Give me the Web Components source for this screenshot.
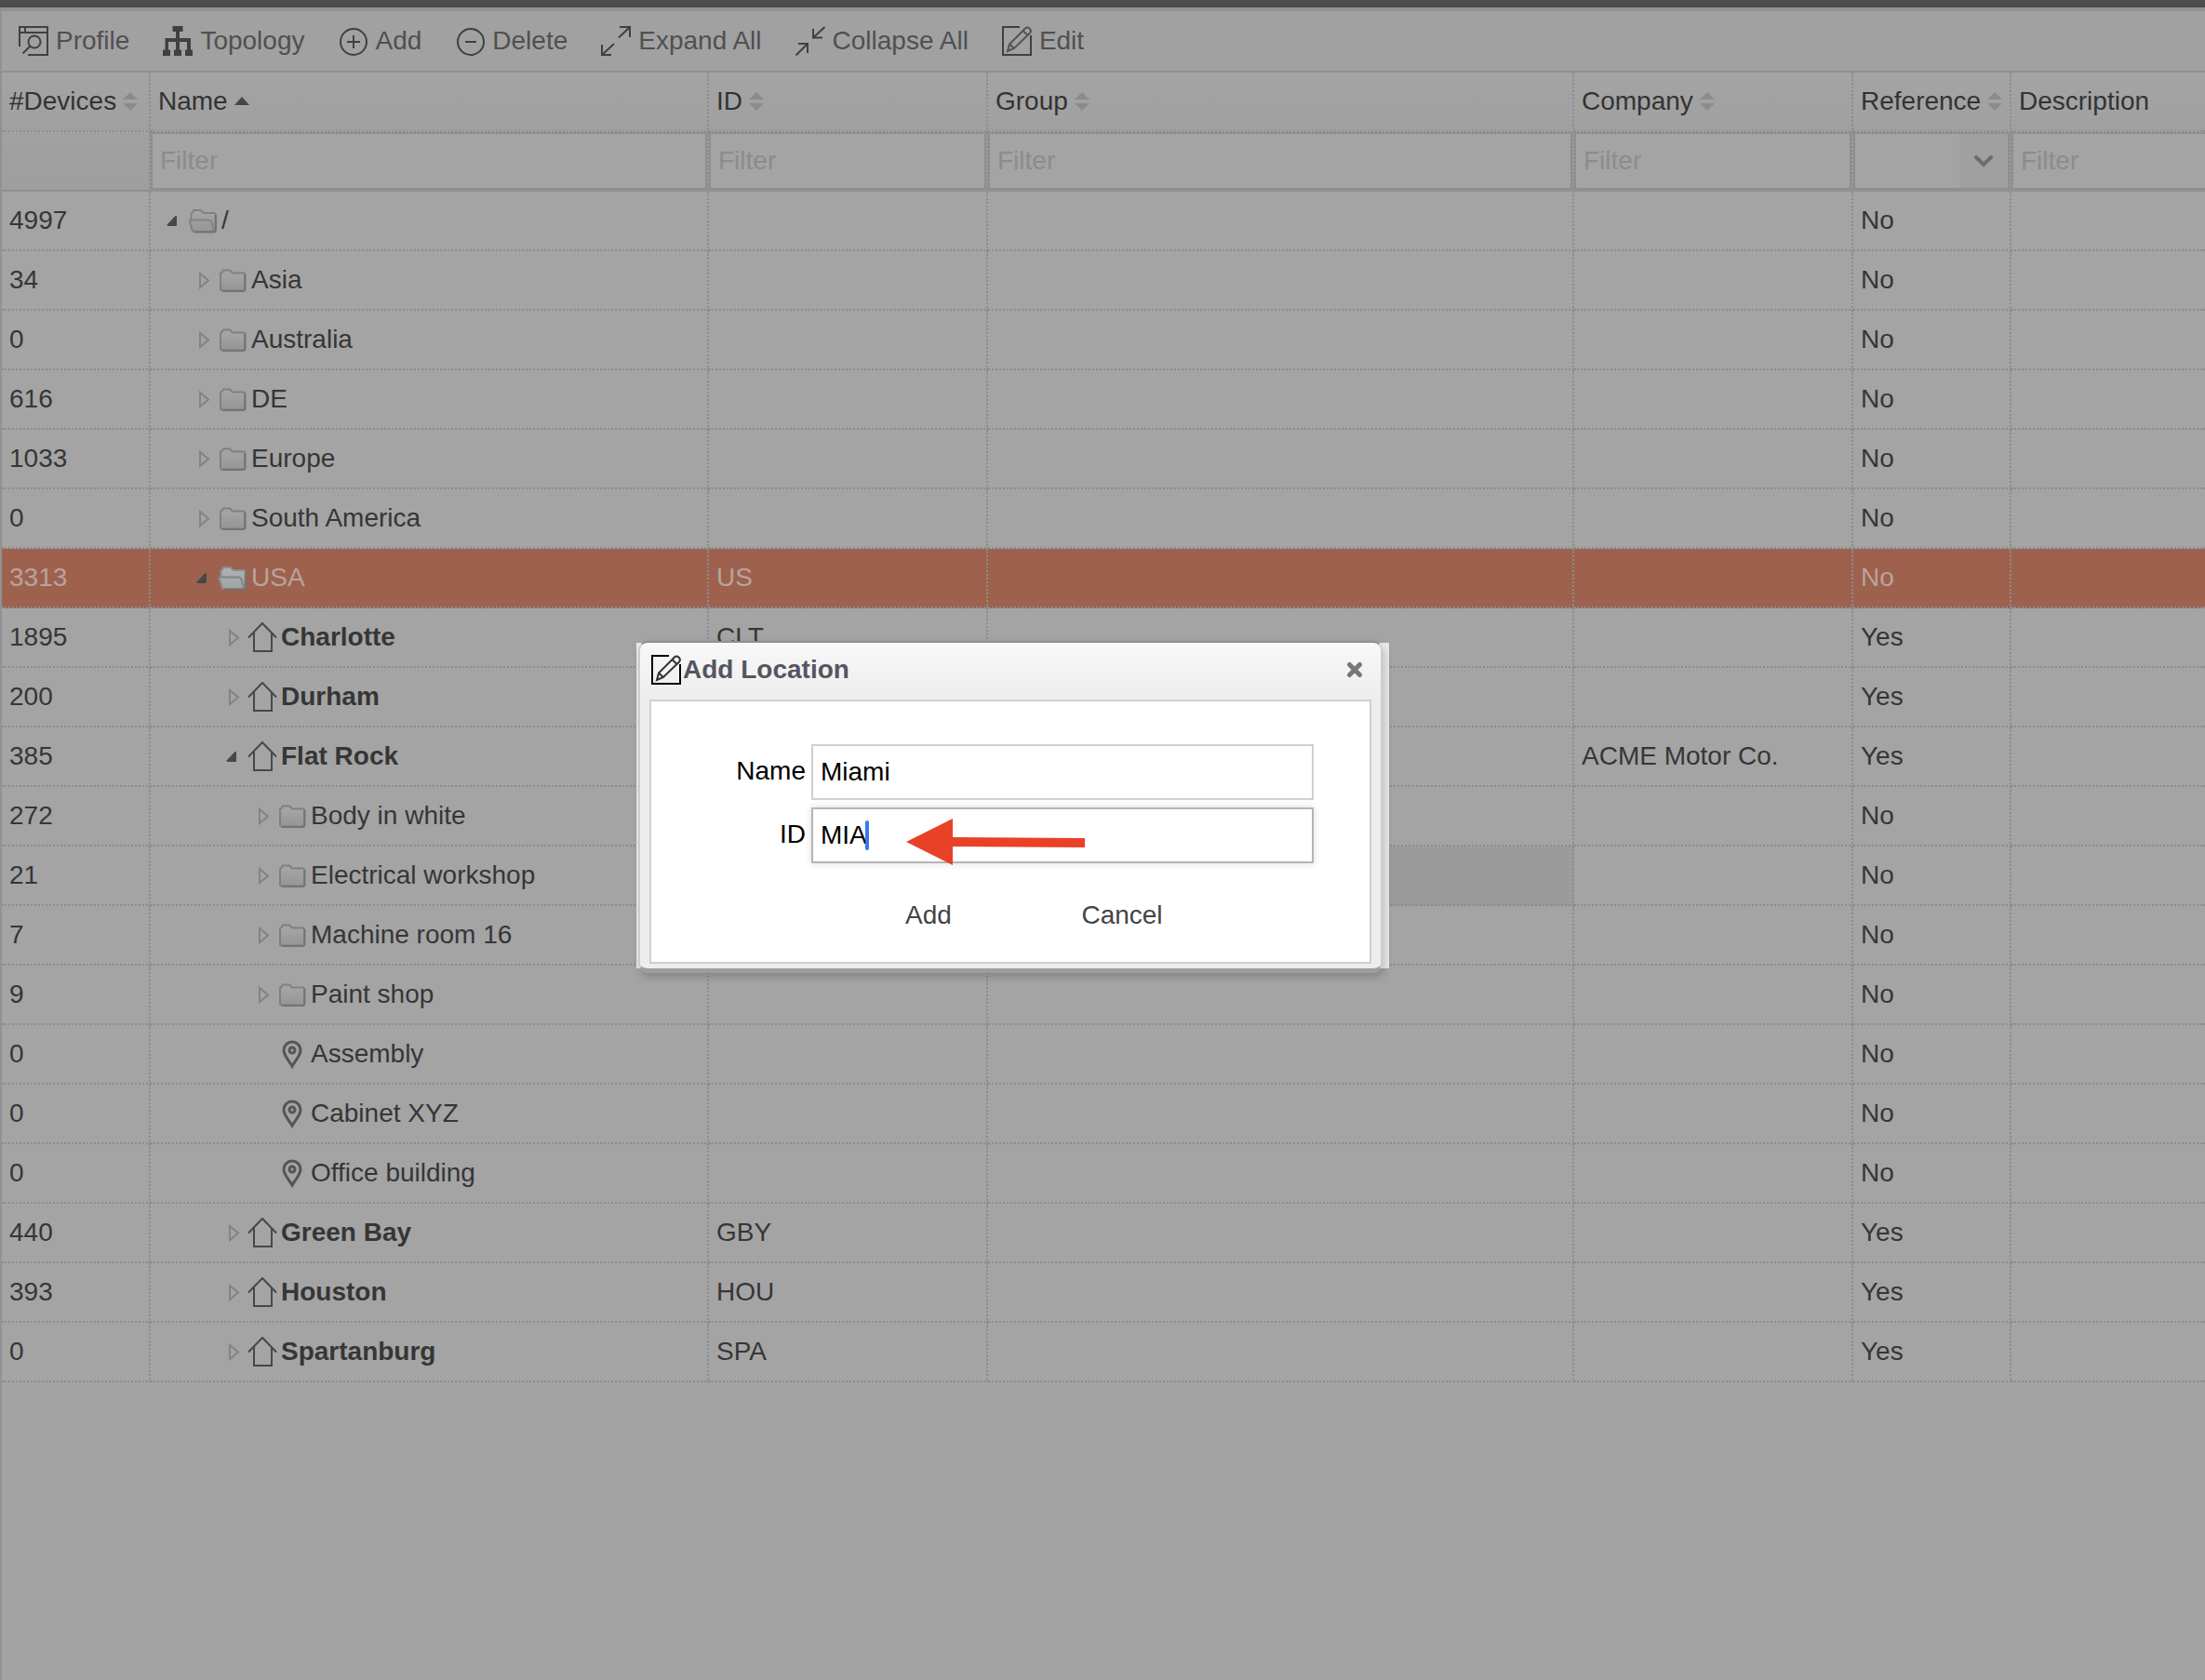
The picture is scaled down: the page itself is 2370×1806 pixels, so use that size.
<!DOCTYPE html>
<html lang="en">
<head>
<meta charset="utf-8">
<title>Locations</title>
<style>
  body {
    margin: 0;
    background: #a3a3a3;
    font: 28px/32px "Liberation Sans", Arial, sans-serif;
    color: #363636;
  }
</style>
</head>
<body>
<locations-app>
  <tool-bar>
    <tool-button icon="profile">Profile</tool-button>
    <tool-button icon="topology">Topology</tool-button>
    <tool-button icon="add">Add</tool-button>
    <tool-button icon="remove">Delete</tool-button>
    <tool-button icon="expand">Expand All</tool-button>
    <tool-button icon="collapse">Collapse All</tool-button>
    <tool-button icon="edit">Edit</tool-button>
  </tool-bar>
  <location-table></location-table>
  <location-dialog slot="overlay" name="Miami" code="MIA">Add Location</location-dialog>
</locations-app>

<script>
// all icons share a 32x32 grid
const ICONS = {
  profile: `<path d="M1 22V1H31V31H10M1 7H31M7 1V7"/><circle cx="17" cy="17" r="6.5"/><path d="M12.500 21.500L4.500 29.500"/>`,
  topology: `<path fill="currentColor" stroke="none" d="M10.500 0h11v6h-3.500v7h12v12.500h2V32h-8v-6.500h2V17h-8v8.500h2V32h-8v-6.500h2V17H6v8.500h2V32H0v-6.500h2.500V13H14V6h-3.500z"/>`,
  add: `<circle cx="17" cy="17" r="14"/><path d="M10 17H24M17 10V24"/>`,
  remove: `<circle cx="17" cy="17" r="14"/><path d="M11 17H23"/>`,
  expand: `<path d="M20 1H31V12M31 1L19 12.500M1 20V31H11M1 31L14 19"/>`,
  collapse: `<path d="M19 3V12.500H29M19 12.500L31.500 1M3 19H13V29M13 19L.5 31.500"/>`,
  edit: `<path d="M19 1H1V31H31V10"/><path class="soft" d="M6 27L8 19.500L25 2.500Q27 .5 29.500 2.500Q32 5 30 7.500L13 24Z M22.500 5L27.500 10M8 19.500L13 24"/>`,
  house: `<path d="M1 16.500L16 1L31 16.500M7 11V31H26V11"/>`,
  pin: `<path class="bold" d="M16 29C14 25 7 18 7 12A9 9 0 0 1 25 12C25 18 18 25 16 29Z"/><circle class="bold" cx="16" cy="12" r="3"/>`,
  folder: `<path class="fill" d="M3 26V9.500Q3 8 4.500 8L6 5.500H13L16 8.500H27.500Q29 8.500 29 10V26Q29 27.500 27 27.500H5Q3 27.500 3 26Z"/><path class="shade" d="M5 28H27.500Q29.500 27.500 29.500 26V10"/>`,
  folderOpen: `<path class="fill" d="M3.500 15V9L6.500 5H13.500L16.500 8H27.500Q29.500 8 29.500 10V26Q29.500 28 27.500 28H7Q5 28 4.500 26L2 17Q2 15 3.500 15Z"/><path class="edge" d="M2.500 15.500H22Q24.500 15.500 25.500 18L28 27"/><path class="shade" d="M7 28.500H28.500Q30 28 30 26V10"/>`,
  closed: `<path class="edge" d="M13 9V24L22 16.500Z"/>`,
  opened: `<path fill="currentColor" stroke-linejoin="round" d="M19 12V21H10.500Z"/>`,
  close: `<path stroke-width="5" stroke-linecap="round" d="M10.500 10.500L21.500 21.500M21.500 10.500L10.500 21.500"/>`,
  chevron: `<path stroke-width="4" stroke-linecap="round" d="M8 12L16 20L24 12"/>`
};

class UiIcon extends HTMLElement {
  connectedCallback() {
    this.attachShadow({ mode: "open" }).innerHTML = `
      <style>
        :host { display: inline-block; flex: none; width: 32px; height: 32px; }
        svg { display: block; fill: none; stroke: currentColor; stroke-width: 2; }
        .fill { fill: url(#body); stroke: var(--folder-line, #808080); }
        .shade { stroke: #747474; }
        .edge { stroke: #838383; }
        .soft { opacity: 0.8; }
        .bold { stroke-width: 3; opacity: 0.85; }
        .top { stop-color: var(--folder-top, #a4a4a4); }
        .bottom { stop-color: var(--folder-bottom, #959595); }
      </style>
      <svg width="32" height="32" viewBox="0 0 32 32" aria-hidden="true">
        <linearGradient id="body" x1="0" y1="0" x2="0" y2="1">
          <stop class="top" offset="0.2"/><stop class="bottom" offset="1"/>
        </linearGradient>
        ${ICONS[this.getAttribute("name")] || ""}
      </svg>
    `;
  }
}

class SortIcon extends HTMLElement {
  connectedCallback() {
    const sorted = this.hasAttribute("sorted");
    this.attachShadow({ mode: "open" }).innerHTML = `
      <style>
        :host { display: inline-block; flex: none; width: 18px; height: 22px; }
        svg { display: block; }
      </style>
      <svg width="18" height="22" viewBox="0 0 18 22" aria-hidden="true">
        ${sorted
          ? `<path fill="#454545" d="M1 15L9 6L17 15Z"/>`
          : `<path fill="#8b8b8b" d="M1 9L9 1L17 9ZM1 13H17L9 21Z"/>`}
      </svg>
    `;
  }
}

class ToolButton extends HTMLElement {
  connectedCallback() {
    this.attachShadow({ mode: "open" }).innerHTML = `
      <style>
        :host { display: block; }
        button {
          display: flex;
          align-items: center;
          gap: 8px;
          padding: 0;
          border: 0;
          background: none;
          font: inherit;
          color: #505050;
          white-space: nowrap;
          cursor: pointer;
        }
        ui-icon { color: #404040; }
      </style>
      <button type="button"><ui-icon name="${this.getAttribute("icon")}"></ui-icon><slot></slot></button>
    `;
  }
}

class ToolBar extends HTMLElement {
  connectedCallback() {
    this.attachShadow({ mode: "open" }).innerHTML = `
      <style>
        :host {
          display: flex;
          align-items: center;
          gap: 36px;
          height: 64px;
          padding: 0 18px;
          border-bottom: 2px solid #919191;
          background: #a1a1a1;
        }
      </style>
      <slot></slot>
    `;
  }
}

class LocationTable extends HTMLElement {
  constructor() {
    super();

    this.columns = [
      { key: "devices", label: "#Devices", width: 160 },
      { key: "name", label: "Name", width: 600, filter: "text", sorted: true },
      { key: "id", label: "ID", width: 300, filter: "text" },
      { key: "group", label: "Group", width: 630, filter: "text" },
      { key: "company", label: "Company", width: 300, filter: "text" },
      { key: "reference", label: "Reference", width: 170, filter: "select" },
      { key: "description", label: "Description", filter: "text", fixed: true },
    ];

    // [devices, level, name, kind, state, id, company]
    this.rows = [
      [4997, 0, "/", "folder", "opened"],
      [34, 1, "Asia", "folder", "closed"],
      [0, 1, "Australia", "folder", "closed"],
      [616, 1, "DE", "folder", "closed"],
      [1033, 1, "Europe", "folder", "closed"],
      [0, 1, "South America", "folder", "closed"],
      [3313, 1, "USA", "folder", "opened", "US"],
      [1895, 2, "Charlotte", "house", "closed", "CLT"],
      [200, 2, "Durham", "house", "closed"],
      [385, 2, "Flat Rock", "house", "opened", "", "ACME Motor Co."],
      [272, 3, "Body in white", "folder", "closed"],
      [21, 3, "Electrical workshop", "folder", "closed"],
      [7, 3, "Machine room 16", "folder", "closed"],
      [9, 3, "Paint shop", "folder", "closed"],
      [0, 3, "Assembly", "pin", ""],
      [0, 3, "Cabinet XYZ", "pin", ""],
      [0, 3, "Office building", "pin", ""],
      [440, 2, "Green Bay", "house", "closed", "GBY"],
      [393, 2, "Houston", "house", "closed", "HOU"],
      [0, 2, "Spartanburg", "house", "closed", "SPA"],
    ];

    // hover marks the group cell of one row
    this.state = { selected: "USA", hover: "Electrical workshop" };
    this.attachShadow({ mode: "open" });
    this.render();
  }

  render() {
    this.shadowRoot.innerHTML = `
      <style>
        :host { display: block; }
        table {
          width: 100%;
          table-layout: fixed;
          border-collapse: separate;
          border-spacing: 0;
        }
        th, td {
          box-sizing: border-box;
          height: 64px;
          padding: 0 0 0 8px;
          border-right: 2px dotted #8c8c8c;
          border-bottom: 2px dotted #8c8c8c;
          text-align: left;
          font-weight: normal;
          white-space: nowrap;
        }
        th:last-child, td:last-child { border-right: 0; }
        .titles th { background: linear-gradient(#a4a4a4, #a0a0a0); color: #333; }
        .titles div { display: flex; align-items: center; gap: 6px; }
        .filters td {
          padding: 0;
          border-bottom: 2px solid #919191;
          background: linear-gradient(#a1a1a1, #9e9e9e);
        }
        input, select {
          display: block;
          box-sizing: border-box;
          width: 100%;
          height: 62px;
          margin: 0;
          padding: 0 8px;
          border: 2px solid #8f8f8f;
          border-radius: 0;
          background: #a4a4a4;
          font: inherit;
          color: inherit;
          appearance: none;
          outline: none;
        }
        input::placeholder { color: #8c8c8c; opacity: 1; }
        .filters td:last-child input { border-right: 0; }
        .pick { display: grid; grid-template-columns: 1fr 56px; }
        .pick select { grid-area: 1 / 1 / 2 / 3; background: linear-gradient(90deg, transparent calc(100% - 52px), #a0a0a0 0) #a4a4a4; }
        .pick ui-icon { grid-area: 1 / 2; place-self: center; color: #6c6c6c; pointer-events: none; }
        tbody tr { background: #a4a4a4; }
        tbody .hover { background: #9b9b9b; }
        tbody tr.selected {
          background: #9e614e;
          color: #b8a49d;
          --folder-top: #adb0b1;
          --folder-bottom: #a0a4a5;
          --folder-line: #8b8f90;
        }
        .node { display: flex; align-items: center; }
        .node span { padding-left: 4px; }
        .node ui-icon { color: #484848; }
        .strong { font-weight: bold; }
      </style>
      <table>
        <colgroup>${this.columns.map((c) => `<col${c.width ? ` style="width:${c.width}px"` : ""}>`).join("")}</colgroup>
        <thead>
          <tr class="titles">${this.columns.map((c) => this.renderTitle(c)).join("")}</tr>
          <tr class="filters">${this.columns.map((c) => this.renderFilter(c)).join("")}</tr>
        </thead>
        <tbody>${this.rows.map((r) => this.renderRow(r)).join("")}</tbody>
      </table>
    `;
    this.attachEvents();
  }

  renderTitle(col) {
    const sort = col.fixed ? "" : `<sort-icon ${col.sorted ? "sorted" : ""}></sort-icon>`;
    return `<th scope="col"><div>${col.label}${sort}</div></th>`;
  }

  renderFilter(col) {
    if (col.filter === "text") {
      return `<td><input type="text" placeholder="Filter" aria-label="Filter ${col.label}"></td>`;
    }
    if (col.filter === "select") {
      return `
        <td><div class="pick">
          <select aria-label="Filter ${col.label}"><option></option><option>Yes</option><option>No</option></select>
          <ui-icon name="chevron"></ui-icon>
        </div></td>`;
    }
    return `<td></td>`;
  }

  renderRow([devices, level, name, kind, state, id = "", company = ""]) {
    const house = kind === "house";
    const icon = kind === "folder" && state === "opened" ? "folderOpen" : kind;
    return `
      <tr class="${name === this.state.selected ? "selected" : ""}" data-name="${name}">
        <td>${devices}</td>
        <td><div class="node ${house ? "strong" : ""}" style="margin-left:${level * 32}px">
          <ui-icon name="${state}"></ui-icon><ui-icon name="${icon}"></ui-icon><span>${name}</span>
        </div></td>
        <td>${id}</td>
        <td class="${name === this.state.hover ? "hover" : ""}"></td>
        <td>${company}</td>
        <td>${house ? "Yes" : "No"}</td>
        <td></td>
      </tr>`;
  }

  attachEvents() {
    this.shadowRoot.querySelectorAll("[data-name]").forEach((row) => {
      row.onclick = () => {
        this.state.selected = row.dataset.name;
        this.render();
      };
    });
  }
}

class LocationDialog extends HTMLElement {
  connectedCallback() {
    this.attachShadow({ mode: "open" }).innerHTML = `
      <style>
        :host { display: block; position: relative; width: 800px; color: #000; }
        /* bright area the window stands on */
        .spot {
          position: absolute;
          inset: 2px -7px 5px -2px;
          background: #ebebeb;
        }
        .window {
          position: relative;
          border: 2px solid #cdcdcd;
          border-top-color: #8f8f8f;
          border-bottom: 5px solid #9d9d9d;
          border-radius: 10px;
          background: linear-gradient(#f8f8f8, #ededed 62px);
          box-shadow: 2px 4px 10px rgba(0, 0, 0, 0.2);
        }
        header { display: flex; align-items: center; padding: 13px 12px 16px; }
        h2 { flex: 1; margin: 0; padding-left: 2px; font-size: 28px; line-height: 32px; color: #555560; }
        button {
          padding: 0;
          border: 0;
          background: none;
          font: inherit;
          color: #444;
          cursor: pointer;
        }
        .close { height: 32px; color: #777; }
        form {
          display: grid;
          gap: 8px;
          margin: 0 10px 5px;
          padding: 46px 60px 20px;
          border: 2px solid #d0d0d0;
          background: #fff;
        }
        .field { display: grid; grid-template-columns: 106px 1fr; gap: 6px; align-items: center; }
        label { padding-bottom: 2px; text-align: right; }
        .box { position: relative; }
        input {
          display: block;
          box-sizing: border-box;
          width: 100%;
          height: 60px;
          padding: 0 8px;
          border: 2px solid #d0d0d0;
          background: #fff;
          font: inherit;
          color: inherit;
          outline: none;
        }
        .active input { border-color: #b5b5b5; box-shadow: 0 0 8px rgba(0, 0, 0, 0.15); }
        .caret {
          position: absolute;
          left: 58px;
          top: 14px;
          width: 4px;
          height: 32px;
          border-radius: 2px;
          background: #3b78ee;
        }
        .pointer { position: absolute; left: 102px; top: 12px; }
        .actions { display: flex; justify-content: center; padding: 18px 0 0 32px; }
        .actions button { width: 208px; height: 60px; }
      </style>
      <div class="spot"></div>
      <section class="window" role="dialog" aria-labelledby="title">
        <header>
          <ui-icon name="edit"></ui-icon>
          <h2 id="title"><slot></slot></h2>
          <button class="close" type="button" aria-label="Close"><ui-icon name="close"></ui-icon></button>
        </header>
        <form>
          <div class="field">
            <label for="name">Name</label>
            <div class="box"><input id="name" type="text" value="${this.getAttribute("name")}"></div>
          </div>
          <div class="field active">
            <label for="code">ID</label>
            <div class="box">
              <input id="code" type="text" value="${this.getAttribute("code")}">
              <span class="caret"></span>
              <svg class="pointer" width="192" height="50" viewBox="0 0 192 50" aria-hidden="true">
                <path fill="#e94127" d="M0 25L50 0V20L192 21V31L50 30V50Z"/>
              </svg>
            </div>
          </div>
          <div class="actions">
            <button type="button">Add</button>
            <button class="cancel" type="button">Cancel</button>
          </div>
        </form>
      </section>
    `;
    this.shadowRoot.querySelectorAll(".close, .cancel").forEach((el) => {
      el.onclick = () => this.remove();
    });
  }
}

class LocationsApp extends HTMLElement {
  connectedCallback() {
    this.attachShadow({ mode: "open" }).innerHTML = `
      <style>
        :host {
          display: block;
          position: relative;
          box-sizing: border-box;
          min-height: 100vh;
          border-top: 8px solid #4d4d4f;
          overflow: hidden;
        }
        main { min-height: calc(100vh - 12px); box-sizing: border-box; border-left: 2px solid #919191; }
        .edge { height: 4px; background: #919191; }
        .overlay { position: absolute; left: 686px; top: 681px; }
      </style>
      <div class="edge"></div>
      <main><slot></slot></main>
      <div class="overlay"><slot name="overlay"></slot></div>
    `;
  }
}

customElements.define("ui-icon", UiIcon);
customElements.define("sort-icon", SortIcon);
customElements.define("tool-button", ToolButton);
customElements.define("tool-bar", ToolBar);
customElements.define("location-table", LocationTable);
customElements.define("location-dialog", LocationDialog);
customElements.define("locations-app", LocationsApp);
</script>
</body>
</html>
